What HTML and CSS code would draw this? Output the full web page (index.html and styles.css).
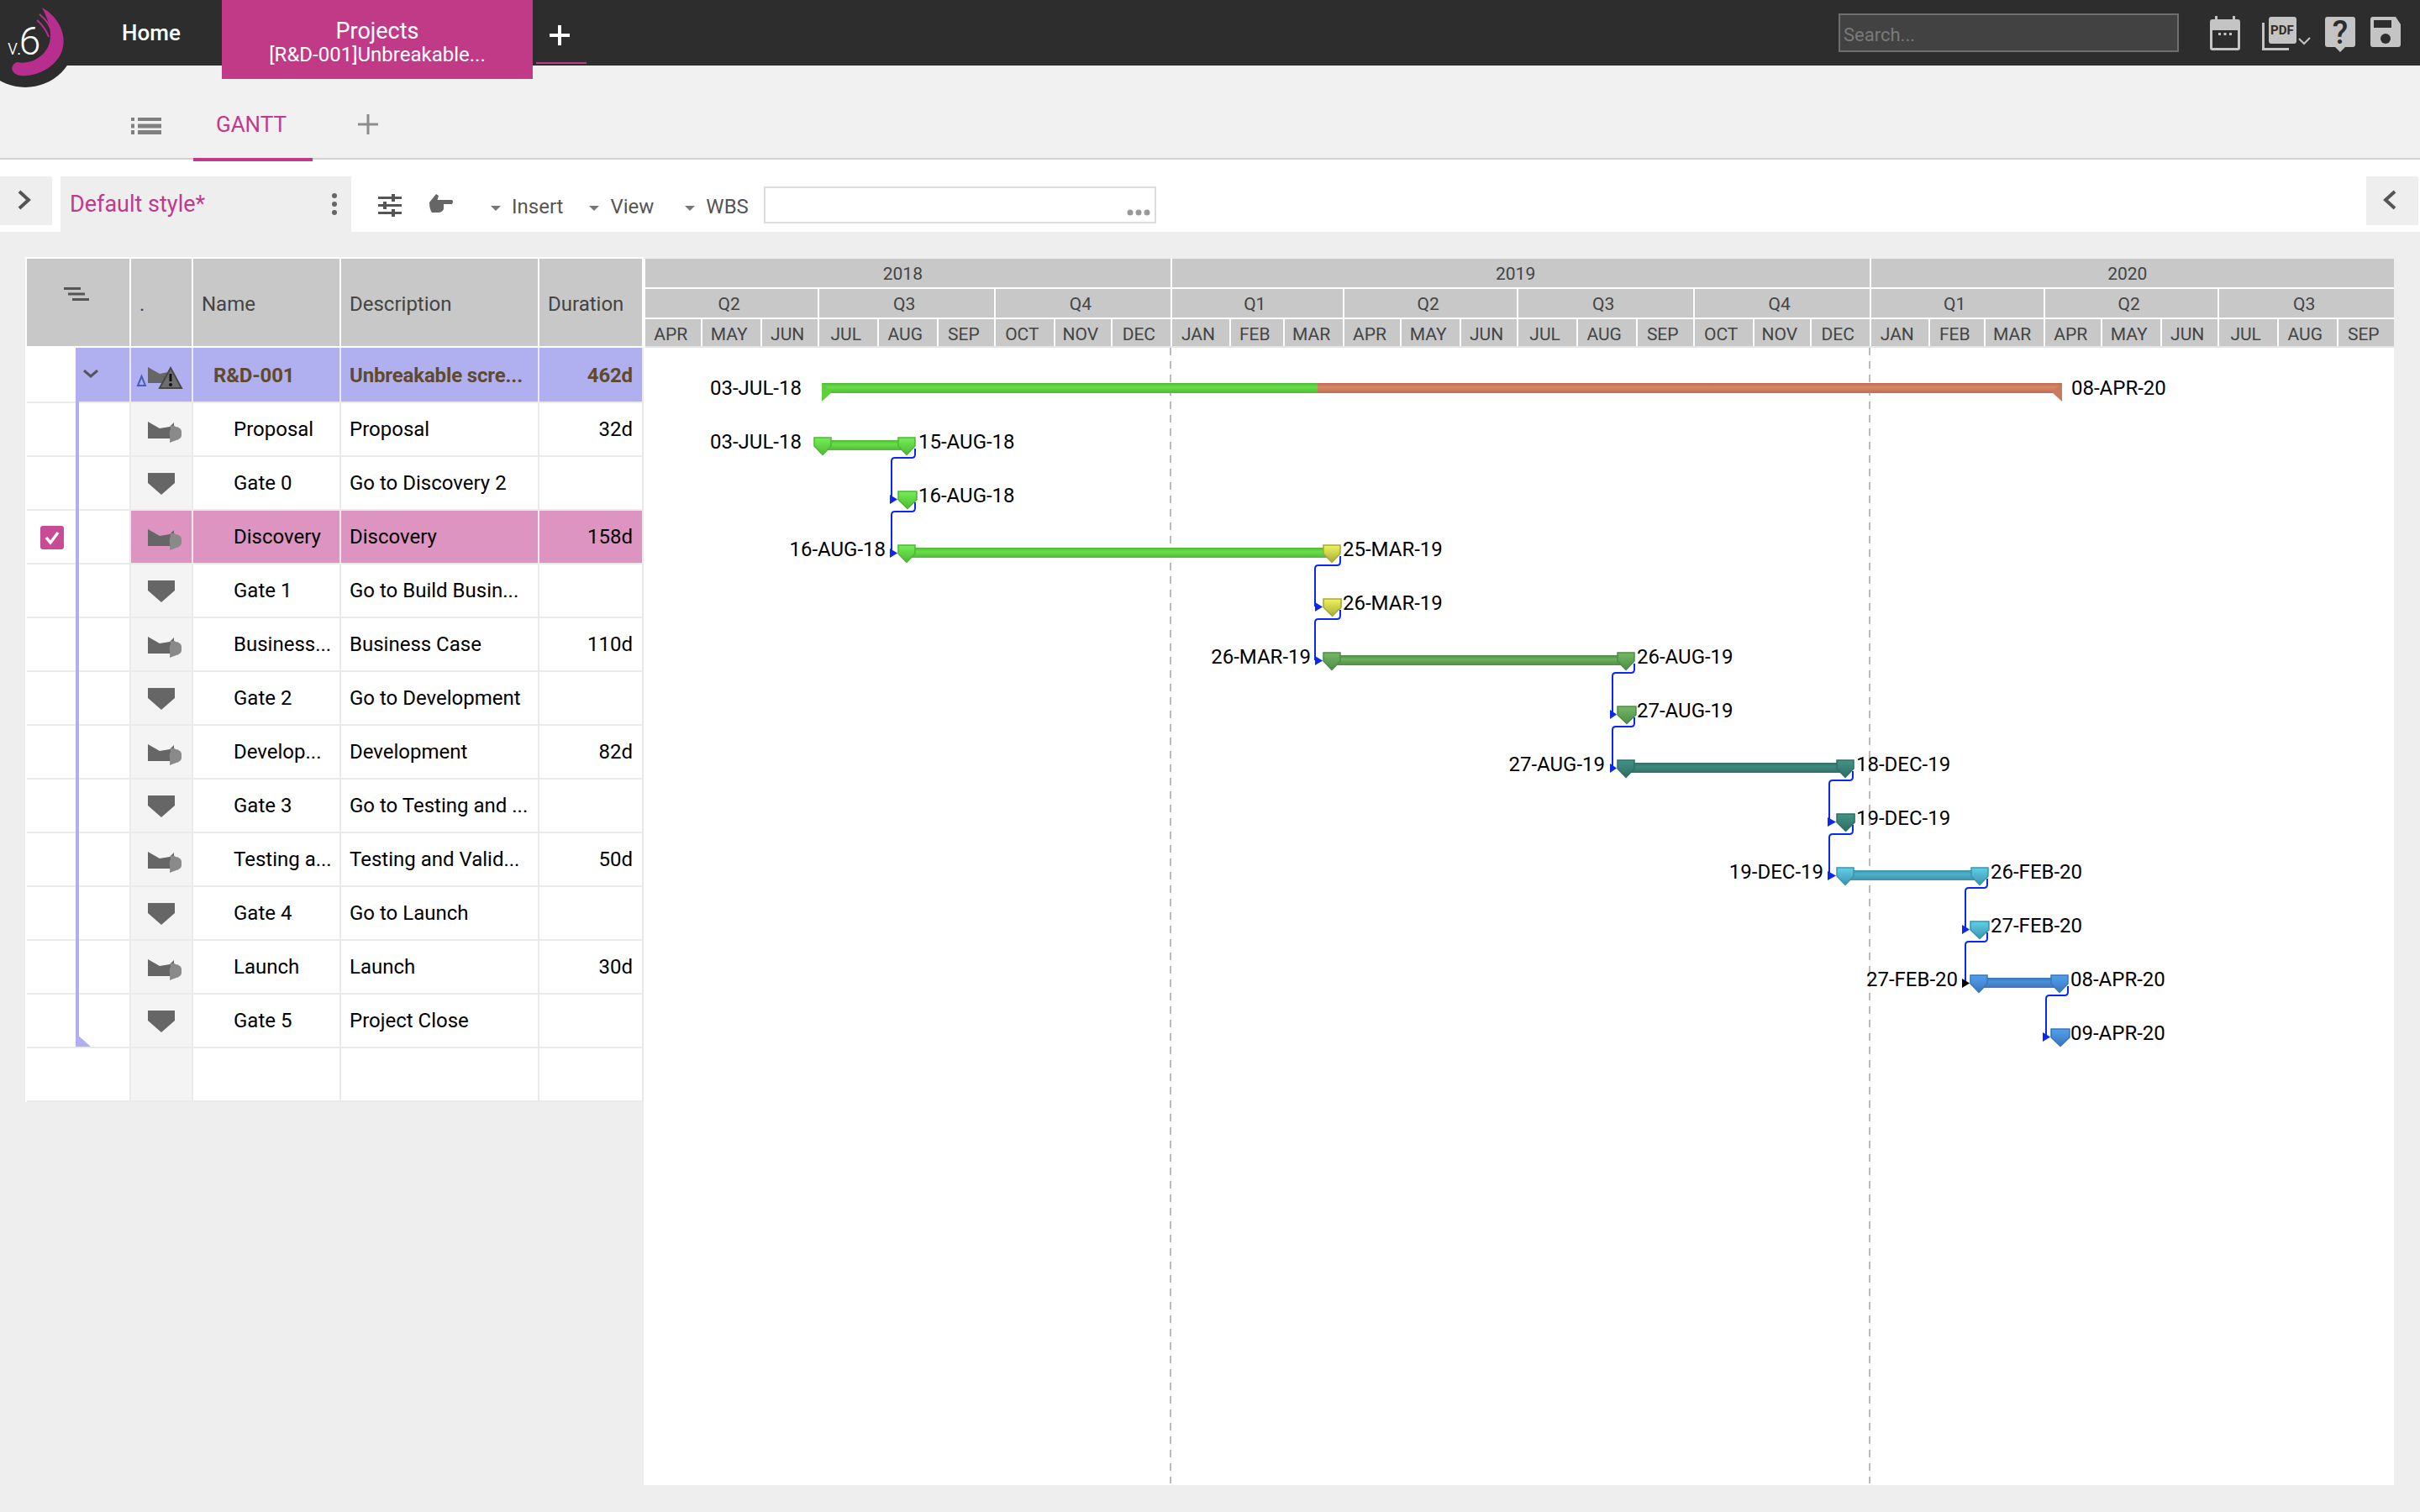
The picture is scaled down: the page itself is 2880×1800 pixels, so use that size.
FILE: index.html
```html
<!DOCTYPE html>
<html lang="en">
<head>
    <meta charset="UTF-8">
    <title>Projects - Gantt</title>
    <link rel="stylesheet" href="styles.css">
</head>
<body>
    <svg class="sprite" width="0" height="0">
        <symbol id="icon-task" viewBox="0 0 48 36">
            <polygon points="8,9 22,17 34,15 39,10 39,29 8,29" fill="#666"/>
            <polygon points="34,34 35,14 40,14 44,20 42,31" fill="#8a8a8a"/>
            <ellipse cx="41" cy="23" rx="7.500" ry="8" fill="#8a8a8a"/>
        </symbol>
        <symbol id="icon-gate" viewBox="0 0 48 36">
            <polygon points="8,6 40,6 40,18 24,32 8,18" fill="#666"/>
        </symbol>
    </svg>

    <svg class="logo" width="110" height="110" viewBox="0 0 110 110">
        <circle cx="30" cy="43" r="61" fill="#2d2d2d"/>
        <path d="M50 9 C70 20 80 42 74 60 C68 78 46 92 24 90 C13 88 11 78 20 74 C34 77 50 70 57 56 C63 44 60 28 50 9 Z" fill="#b82e8e"/>
        <path d="M47 17 C56 24 61 32 64 44 M44 24 C51 30 55 36 58 44" fill="none" stroke="#b82e8e" stroke-width="2"/>
        <text class="logo-text" x="9" y="65">v.<tspan class="logo-six" dx="-3">6</tspan></text>
    </svg>

    <div class="topbar">
        <div class="top-home">Home</div>
        <div class="top-tab">
            <div class="top-tab-title">Projects</div>
            <div>[R&amp;D-001]Unbreakable...</div>
        </div>
        <div class="top-add">
            <svg width="24" height="24" viewBox="0 0 24 24"><path d="M10 0h4v10h10v4H14v10h-4V14H0v-4h10z" fill="#fff"/></svg>
        </div>
        <input class="top-search" type="text" placeholder="Search...">
        <svg class="top-icon icon-calendar" width="36" height="41" viewBox="0 0 36 41">
            <rect x="6" y="0" width="3" height="8" fill="#c4c4c4"/>
            <rect x="27" y="0" width="3" height="8" fill="#c4c4c4"/>
            <rect x="0" y="4" width="36" height="37" rx="3" fill="#c4c4c4"/>
            <rect x="3" y="17" width="30" height="21" fill="#2d2d2d"/>
            <rect x="10" y="20" width="3" height="3" fill="#c4c4c4"/>
            <rect x="16.5" y="20" width="3" height="3" fill="#c4c4c4"/>
            <rect x="23" y="20" width="3" height="3" fill="#c4c4c4"/>
        </svg>
        <svg class="top-icon icon-pdf" width="58" height="41" viewBox="0 0 58 41">
            <path d="M1.5 8V39.5H32" fill="none" stroke="#c4c4c4" stroke-width="3"/>
            <rect x="8" y="1" width="33" height="32" rx="3" fill="#c4c4c4"/>
            <text class="pdf-text" x="10" y="22">PDF</text>
            <path d="M44 27l6 6 7-7" fill="none" stroke="#c4c4c4" stroke-width="2"/>
        </svg>
        <svg class="top-icon icon-help" width="36" height="48" viewBox="0 -6 36 48">
            <path d="M3 0H33Q36 0 36 3V33Q36 36 33 36H24L18 42L12 36H3Q0 36 0 33V3Q0 0 3 0Z" fill="#c4c4c4"/>
            <text class="help-text" x="18" y="32">?</text>
        </svg>
        <svg class="top-icon icon-save" width="36" height="36" viewBox="0 0 36 36">
            <path d="M3 0H30L36 9V33Q36 36 33 36H3Q0 36 0 33V3Q0 0 3 0Z" fill="#c4c4c4"/>
            <rect x="4" y="4" width="21" height="9" fill="#2d2d2d"/>
            <circle cx="18" cy="26" r="6" fill="#2d2d2d"/>
        </svg>
    </div>

    <div class="tabbar">
        <svg class="tab-list" width="36" height="20" viewBox="0 0 36 20">
            <path d="M0 0h4v4H0zM8 0h28v4H8zM0 7.500h4v5H0zM8 7.500h28v5H8zM0 15h4v5H0zM8 15h28v5H8z" fill="#808080"/>
        </svg>
        <div class="tab-gantt">GANTT</div>
        <svg class="tab-add" width="24" height="24" viewBox="0 0 24 24"><path d="M10.500 0h3v10.500H24v3H13.500V24h-3V13.500H0v-3h10.500z" fill="#8c8c8c"/></svg>
    </div>

    <div class="toolbar">
        <div class="side-btn">
            <svg width="16" height="24" viewBox="0 0 16 24"><path d="M2 2l11 10L2 22" fill="none" stroke="#555" stroke-width="4"/></svg>
        </div>
        <div class="style-box">
            <span>Default style*</span>
            <svg width="6" height="26" viewBox="0 0 6 26"><circle cx="3" cy="3" r="3" fill="#666"/><circle cx="3" cy="13" r="3" fill="#666"/><circle cx="3" cy="23" r="3" fill="#666"/></svg>
        </div>
        <svg class="tool-sliders" width="28" height="28" viewBox="0 0 28 28">
            <path d="M0 4h16V1h4v3h8v3h-8v3h-4V7H0zM0 13h6v-3h4v3h18v3H10v3H6v-3H0zM0 22h16v-3h4v3h8v3h-8v3h-4v-3H0z" fill="#555"/>
        </svg>
        <svg class="tool-hand" width="28" height="22" viewBox="0 0 28 22">
            <path d="M8 0 L11 2 L9.500 7 H27 Q29 9 27 12 H17 L17 18 Q15 22 11 22 H3 Q0 18 0 10 Z" fill="#666"/>
        </svg>
        <div class="tool-menu tool-insert"><i class="caret"></i>Insert</div>
        <div class="tool-menu tool-view"><i class="caret"></i>View</div>
        <div class="tool-menu tool-wbs"><i class="caret"></i>WBS</div>
        <div class="wbs-input">
            <svg width="28" height="8" viewBox="0 0 28 8"><circle cx="4" cy="4" r="3.500" fill="#999"/><circle cx="14" cy="4" r="3.500" fill="#999"/><circle cx="24" cy="4" r="3.500" fill="#999"/></svg>
        </div>
        <div class="side-btn side-right">
            <svg width="16" height="24" viewBox="0 0 16 24"><path d="M14 2L3 12l11 10" fill="none" stroke="#555" stroke-width="4"/></svg>
        </div>
    </div>

    <div class="main">
        <div class="table-wrap">
            <div class="row row-head">
                <div class="cell cell-sort">
                    <svg width="30" height="16" viewBox="0 0 30 16"><path d="M0 0h20v3H0zM5 6.500h20v3H5zM10 13h20v3H10z" fill="#555"/></svg>
                </div>
                <div class="cell">.</div>
                <div class="cell">Name</div>
                <div class="cell">Description</div>
                <div class="cell">Duration</div>
            </div>
            <div class="table-body">
                <div class="tree-line"></div>
                <div class="row row-root">
                    <div class="cell cell-first"><div class="expander"><svg width="18" height="10" viewBox="0 0 18 10"><path d="M1 1l8 7 8-7" fill="none" stroke="#555" stroke-width="3"/></svg></div></div>
                    <div class="cell cell-icon">
                        <svg width="64" height="36" viewBox="0 0 64 36">
                            <polygon points="8.500,20 4,31 13,31" fill="none" stroke="#4a5ac0" stroke-width="2"/>
                            <polygon points="16,9 30,17 40,15 40,28 16,28" fill="#666"/>
                            <polygon points="43,10 56,34 30,34" fill="#6e6e6e" stroke="#484848" stroke-width="2"/>
                            <rect x="41.500" y="17" width="3" height="9" fill="#111"/>
                            <circle cx="43" cy="30" r="2" fill="#111"/>
                        </svg>
                    </div>
                    <div class="cell cell-name">R&amp;D-001</div>
                    <div class="cell">Unbreakable scre...</div>
                    <div class="cell cell-num">462d</div>
                </div>
                <div class="row">
                    <div class="cell cell-first"></div>
                    <div class="cell cell-icon"><svg width="48" height="36"><use href="#icon-task"/></svg></div>
                    <div class="cell cell-name">Proposal</div>
                    <div class="cell">Proposal</div>
                    <div class="cell cell-num">32d</div>
                </div>
                <div class="row">
                    <div class="cell cell-first"></div>
                    <div class="cell cell-icon"><svg width="48" height="36"><use href="#icon-gate"/></svg></div>
                    <div class="cell cell-name">Gate 0</div>
                    <div class="cell">Go to Discovery 2</div>
                    <div class="cell cell-num"></div>
                </div>
                <div class="row row-selected">
                    <div class="cell cell-first">
                        <svg class="check" width="28" height="28" viewBox="0 0 28 28">
                            <rect width="28" height="28" rx="3" fill="#c84b96"/>
                            <path d="M7 14l5 6 9-12" fill="none" stroke="#fff" stroke-width="3.500"/>
                        </svg>
                    </div>
                    <div class="cell cell-icon"><svg width="48" height="36"><use href="#icon-task"/></svg></div>
                    <div class="cell cell-name">Discovery</div>
                    <div class="cell">Discovery</div>
                    <div class="cell cell-num">158d</div>
                </div>
                <div class="row">
                    <div class="cell cell-first"></div>
                    <div class="cell cell-icon"><svg width="48" height="36"><use href="#icon-gate"/></svg></div>
                    <div class="cell cell-name">Gate 1</div>
                    <div class="cell">Go to Build Busin...</div>
                    <div class="cell cell-num"></div>
                </div>
                <div class="row">
                    <div class="cell cell-first"></div>
                    <div class="cell cell-icon"><svg width="48" height="36"><use href="#icon-task"/></svg></div>
                    <div class="cell cell-name">Business...</div>
                    <div class="cell">Business Case</div>
                    <div class="cell cell-num">110d</div>
                </div>
                <div class="row">
                    <div class="cell cell-first"></div>
                    <div class="cell cell-icon"><svg width="48" height="36"><use href="#icon-gate"/></svg></div>
                    <div class="cell cell-name">Gate 2</div>
                    <div class="cell">Go to Development</div>
                    <div class="cell cell-num"></div>
                </div>
                <div class="row">
                    <div class="cell cell-first"></div>
                    <div class="cell cell-icon"><svg width="48" height="36"><use href="#icon-task"/></svg></div>
                    <div class="cell cell-name">Develop...</div>
                    <div class="cell">Development</div>
                    <div class="cell cell-num">82d</div>
                </div>
                <div class="row">
                    <div class="cell cell-first"></div>
                    <div class="cell cell-icon"><svg width="48" height="36"><use href="#icon-gate"/></svg></div>
                    <div class="cell cell-name">Gate 3</div>
                    <div class="cell">Go to Testing and ...</div>
                    <div class="cell cell-num"></div>
                </div>
                <div class="row">
                    <div class="cell cell-first"></div>
                    <div class="cell cell-icon"><svg width="48" height="36"><use href="#icon-task"/></svg></div>
                    <div class="cell cell-name">Testing a...</div>
                    <div class="cell">Testing and Valid...</div>
                    <div class="cell cell-num">50d</div>
                </div>
                <div class="row">
                    <div class="cell cell-first"></div>
                    <div class="cell cell-icon"><svg width="48" height="36"><use href="#icon-gate"/></svg></div>
                    <div class="cell cell-name">Gate 4</div>
                    <div class="cell">Go to Launch</div>
                    <div class="cell cell-num"></div>
                </div>
                <div class="row">
                    <div class="cell cell-first"></div>
                    <div class="cell cell-icon"><svg width="48" height="36"><use href="#icon-task"/></svg></div>
                    <div class="cell cell-name">Launch</div>
                    <div class="cell">Launch</div>
                    <div class="cell cell-num">30d</div>
                </div>
                <div class="row">
                    <div class="cell cell-first"></div>
                    <div class="cell cell-icon"><svg width="48" height="36"><use href="#icon-gate"/></svg></div>
                    <div class="cell cell-name">Gate 5</div>
                    <div class="cell">Project Close</div>
                    <div class="cell cell-num"></div>
                </div>
                <div class="row">
                    <div class="cell cell-first"></div>
                    <div class="cell cell-icon"></div>
                    <div class="cell cell-name"></div>
                    <div class="cell"></div>
                    <div class="cell cell-num"></div>
                </div>
            </div>
        </div>

        <div class="timeline">
            <div class="scale">
                <div class="scale-year">2018</div>
                <div class="scale-year">2019</div>
                <div class="scale-year">2020</div>
                <div class="scale-q">Q2</div>
                <div class="scale-q">Q3</div>
                <div class="scale-q">Q4</div>
                <div class="scale-q">Q1</div>
                <div class="scale-q">Q2</div>
                <div class="scale-q">Q3</div>
                <div class="scale-q">Q4</div>
                <div class="scale-q">Q1</div>
                <div class="scale-q">Q2</div>
                <div class="scale-q">Q3</div>
                <div>APR</div><div>MAY</div><div>JUN</div><div>JUL</div><div>AUG</div><div>SEP</div><div>OCT</div><div>NOV</div><div>DEC</div>
                <div>JAN</div><div>FEB</div><div>MAR</div><div>APR</div><div>MAY</div><div>JUN</div><div>JUL</div><div>AUG</div><div>SEP</div><div>OCT</div><div>NOV</div><div>DEC</div>
                <div>JAN</div><div>FEB</div><div>MAR</div><div>APR</div><div>MAY</div><div>JUN</div><div>JUL</div><div>AUG</div><div>SEP</div>
            </div>

            <!-- chart uses page coordinates through the viewBox -->
            <svg class="chart" width="2081" height="1352" viewBox="768 414 2081 1352">
                <defs>
                    <linearGradient id="bar-green" x2="0" y2="1"><stop offset="0" stop-color="#4fb735"/><stop offset=".4" stop-color="#68e04a"/><stop offset="1" stop-color="#50b836"/></linearGradient>
                    <linearGradient id="bar-rust" x2="0" y2="1"><stop offset="0" stop-color="#b96d54"/><stop offset=".4" stop-color="#d98568"/><stop offset="1" stop-color="#bb6f56"/></linearGradient>
                    <linearGradient id="bar-moss" x2="0" y2="1"><stop offset="0" stop-color="#4f8c45"/><stop offset=".4" stop-color="#6fb060"/><stop offset="1" stop-color="#4f8c45"/></linearGradient>
                    <linearGradient id="bar-teal" x2="0" y2="1"><stop offset="0" stop-color="#2f6f66"/><stop offset=".4" stop-color="#3f8a7f"/><stop offset="1" stop-color="#2f6f66"/></linearGradient>
                    <linearGradient id="bar-cyan" x2="0" y2="1"><stop offset="0" stop-color="#3d93ab"/><stop offset=".4" stop-color="#4fb3cc"/><stop offset="1" stop-color="#3d8fa6"/></linearGradient>
                    <linearGradient id="bar-blue" x2="0" y2="1"><stop offset="0" stop-color="#3a75bb"/><stop offset=".4" stop-color="#4a8fd8"/><stop offset="1" stop-color="#3a75bb"/></linearGradient>
                    <linearGradient id="top-green" x2="0" y2="1"><stop offset="0" stop-color="#74ef56"/><stop offset="1" stop-color="#4fb836"/></linearGradient>
                    <linearGradient id="top-yellow" x2="0" y2="1"><stop offset="0" stop-color="#eef35c"/><stop offset="1" stop-color="#aaac3a"/></linearGradient>
                    <linearGradient id="top-moss" x2="0" y2="1"><stop offset="0" stop-color="#74b866"/><stop offset="1" stop-color="#4f8c45"/></linearGradient>
                    <linearGradient id="top-teal" x2="0" y2="1"><stop offset="0" stop-color="#439488"/><stop offset="1" stop-color="#2e6c63"/></linearGradient>
                    <linearGradient id="top-cyan" x2="0" y2="1"><stop offset="0" stop-color="#5fd0ea"/><stop offset="1" stop-color="#3d93ab"/></linearGradient>
                    <linearGradient id="top-blue" x2="0" y2="1"><stop offset="0" stop-color="#52a0ee"/><stop offset="1" stop-color="#3a75bb"/></linearGradient>
                    <polygon id="m-green" points="1,1 21,1 21,11 11,21.500 1,11" fill="url(#top-green)" stroke="#4fb735" stroke-width="1.500"/>
                    <polygon id="m-yellow" points="1,1 21,1 21,11 11,21.500 1,11" fill="url(#top-yellow)" stroke="#a5a83a" stroke-width="1.500"/>
                    <polygon id="m-moss" points="1,1 21,1 21,11 11,21.500 1,11" fill="url(#top-moss)" stroke="#4f8c45" stroke-width="1.500"/>
                    <polygon id="m-teal" points="1,1 21,1 21,11 11,21.500 1,11" fill="url(#top-teal)" stroke="#2f6f66" stroke-width="1.500"/>
                    <polygon id="m-cyan" points="1,1 21,1 21,11 11,21.500 1,11" fill="url(#top-cyan)" stroke="#3d93ab" stroke-width="1.500"/>
                    <polygon id="m-blue" points="1,1 21,1 21,11 11,21.500 1,11" fill="url(#top-blue)" stroke="#3a75bb" stroke-width="1.500"/>
                </defs>

                <line class="year-line" x1="1393" y1="414" x2="1393" y2="1766"/>
                <line class="year-line" x1="2225" y1="414" x2="2225" y2="1766"/>

                <!-- summary bar -->
                <rect x="978" y="456" width="590" height="12" fill="url(#bar-green)"/>
                <rect x="1568" y="456" width="886" height="12" fill="url(#bar-rust)"/>
                <polygon points="978,456 990,467 978,478" fill="#5fcf3e"/>
                <polygon points="2454,456 2442,467 2454,478" fill="#c87a5e"/>

                <!-- links -->
                <g class="links">
                    <path d="M1089 534V541Q1089 545 1085 545H1065Q1061 545 1061 549V594"/>
                    <path d="M1089 598V605Q1089 609 1085 609H1065Q1061 609 1061 613V658"/>
                    <path d="M1595 662V669Q1595 673 1591 673H1569Q1565 673 1565 677V722"/>
                    <path d="M1595 726V733Q1595 737 1591 737H1569Q1565 737 1565 741V786"/>
                    <path d="M1945 790V797Q1945 801 1941 801H1923Q1919 801 1919 805V850"/>
                    <path d="M1945 854V861Q1945 865 1941 865H1923Q1919 865 1919 869V914"/>
                    <path d="M2205 918V925Q2205 929 2201 929H2181Q2177 929 2177 933V978"/>
                    <path d="M2205 982V989Q2205 993 2201 993H2181Q2177 993 2177 997V1042"/>
                    <path d="M2365 1046V1053Q2365 1057 2361 1057H2343Q2339 1057 2339 1061V1106"/>
                    <path d="M2365 1110V1117Q2365 1121 2361 1121H2343Q2339 1121 2339 1125V1170"/>
                    <path d="M2461 1174V1181Q2461 1185 2457 1185H2439Q2435 1185 2435 1189V1234"/>
                </g>
                <g fill="#0a28f0">
                    <polygon points="1059,589 1068,594.500 1059,600"/>
                    <polygon points="1059,653 1068,658.500 1059,664"/>
                    <polygon points="1565,717 1574,722.500 1565,728"/>
                    <polygon points="1565,781 1574,786.500 1565,792"/>
                    <polygon points="1916,845 1924,850.500 1916,856"/>
                    <polygon points="1916,909 1924,914.500 1916,920"/>
                    <polygon points="2175,973 2185,978.500 2175,984"/>
                    <polygon points="2175,1037 2185,1042.500 2175,1048"/>
                    <polygon points="2335,1101 2344,1106.500 2335,1112"/>
                    <polygon points="2431,1229 2440,1234.500 2431,1240"/>
                </g>
                <polygon points="2335,1165 2344,1170.500 2335,1176" fill="#000"/>

                <!-- task bars -->
                <rect x="979" y="524" width="100" height="12" fill="url(#bar-green)"/>
                <rect x="1079" y="652" width="506" height="12" fill="url(#bar-green)"/>
                <rect x="1585" y="780" width="350" height="12" fill="url(#bar-moss)"/>
                <rect x="1935" y="908" width="260" height="12" fill="url(#bar-teal)"/>
                <rect x="2195" y="1036" width="160" height="12" fill="url(#bar-cyan)"/>
                <rect x="2355" y="1164" width="96" height="12" fill="url(#bar-blue)"/>

                <!-- markers -->
                <use href="#m-green" x="968" y="520"/>
                <use href="#m-green" x="1068" y="520"/>
                <use href="#m-green" transform="translate(1068 584) scale(1.090 1)"/>
                <use href="#m-green" x="1068" y="648"/>
                <use href="#m-yellow" x="1574" y="648"/>
                <use href="#m-yellow" transform="translate(1574 712) scale(1.050 1)"/>
                <use href="#m-moss" x="1574" y="776"/>
                <use href="#m-moss" x="1924" y="776"/>
                <use href="#m-moss" transform="translate(1924 840) scale(1.090 1)"/>
                <use href="#m-teal" x="1924" y="904"/>
                <use href="#m-teal" x="2185" y="904"/>
                <use href="#m-teal" transform="translate(2185 968) scale(1.050 1)"/>
                <use href="#m-cyan" x="2345" y="1032"/>
                <use href="#m-cyan" transform="translate(2344 1096) scale(1.090 1)"/>
                <use href="#m-cyan" x="2185" y="1032"/>
                <use href="#m-blue" x="2344" y="1160"/>
                <use href="#m-blue" x="2440" y="1160"/>
                <use href="#m-blue" transform="translate(2440 1224) scale(1.090 1)"/>

                <!-- dates -->
                <text class="date" x="845" y="470">03-JUL-18</text>
                <text class="date" x="2465" y="470">08-APR-20</text>
                <text class="date" x="845" y="534">03-JUL-18</text>
                <text class="date" x="1093" y="534">15-AUG-18</text>
                <text class="date" x="1093" y="598">16-AUG-18</text>
                <text class="date date-left" x="1054" y="662">16-AUG-18</text>
                <text class="date" x="1598" y="662">25-MAR-19</text>
                <text class="date" x="1598" y="726">26-MAR-19</text>
                <text class="date date-left" x="1560" y="790">26-MAR-19</text>
                <text class="date" x="1948" y="790">26-AUG-19</text>
                <text class="date" x="1948" y="854">27-AUG-19</text>
                <text class="date date-left" x="1910" y="918">27-AUG-19</text>
                <text class="date" x="2209" y="918">18-DEC-19</text>
                <text class="date" x="2209" y="982">19-DEC-19</text>
                <text class="date date-left" x="2170" y="1046">19-DEC-19</text>
                <text class="date" x="2369" y="1046">26-FEB-20</text>
                <text class="date" x="2369" y="1110">27-FEB-20</text>
                <text class="date date-left" x="2330" y="1174">27-FEB-20</text>
                <text class="date" x="2464" y="1174">08-APR-20</text>
                <text class="date" x="2464" y="1238">09-APR-20</text>
            </svg>
        </div>
    </div>
</body>
</html>
```

FILE: styles.css
```css
html, body {
    margin: 0;
    padding: 0;
}
body {
    width: 2880px;
    height: 1800px;
    overflow: hidden;
    background-color: #eeeeee;
    font-family: Roboto, "Liberation Sans", sans-serif;
    font-size: 24px;
    color: #000;
}
.sprite {
    position: absolute;
}
.logo {
    position: absolute;
    left: 0;
    top: 0;
    z-index: 5;
}
.logo-text {
    font-size: 25px;
    font-weight: 300;
    fill: #fff;
}
.logo-six {
    font-size: 46px;
}

/* top bar */
.topbar {
    height: 78px;
    background-color: #2d2d2d;
    display: flex;
    align-items: flex-start;
}
.top-home {
    width: 264px;
    box-sizing: border-box;
    padding: 24px 4px 0 100px;
    text-align: center;
    color: #fff;
    font-size: 26px;
    font-weight: 500;
}
.top-tab {
    width: 370px;
    height: 94px;
    box-sizing: border-box;
    padding-top: 23px;
    background-color: #c13a88;
    color: #fff;
    font-size: 24px;
    line-height: 28px;
    text-align: center;
    position: relative;
    z-index: 2;
}
.top-tab-title {
    font-size: 27px;
}
.top-add {
    width: 60px;
    height: 76px;
    margin-left: 4px;
    box-sizing: border-box;
    padding: 30px 0 0 16px;
    border-bottom: 2px solid #c13a88;
}
.top-search {
    width: 405px;
    height: 46px;
    margin: 16px 0 0 1490px;
    padding: 4px 4px 0;
    box-sizing: border-box;
    border: 2px solid #6e6e6e;
    background-color: #424242;
    font-family: inherit;
    font-size: 22px;
}
.top-search::placeholder {
    color: #7a7a7a;
    opacity: 1;
}
.top-icon {
    flex: none;
}
.icon-calendar {
    margin: 19px 0 0 37px;
}
.icon-pdf {
    margin: 19px 0 0 26px;
}
.icon-help {
    margin: 14px 0 0 17px;
}
.icon-save {
    margin: 20px 0 0 18px;
}
.pdf-text {
    font-size: 15px;
    font-weight: 700;
    fill: #2d2d2d;
}
.help-text {
    font-size: 38px;
    font-weight: 500;
    fill: #2d2d2d;
    text-anchor: middle;
}

/* gantt tab row */
.tabbar {
    height: 112px;
    box-sizing: border-box;
    background-color: #f1f1f1;
    border-bottom: 2px solid #d3d3d3;
    display: flex;
    align-items: flex-start;
}
.tab-list {
    margin: 62px 0 0 156px;
}
.tab-gantt {
    width: 142px;
    height: 114px;
    margin-left: 38px;
    box-sizing: border-box;
    padding: 54px 4px 0 0;
    line-height: 32px;
    color: #c2398b;
    font-size: 26px;
    text-align: center;
    border-bottom: 4px solid #c2398b;
}
.tab-add {
    margin: 58px 0 0 54px;
}

/* toolbar */
.toolbar {
    height: 86px;
    background-color: #fff;
    display: flex;
    align-items: flex-start;
}
.side-btn {
    width: 62px;
    height: 58px;
    margin-top: 20px;
    background-color: #eeeeee;
    box-sizing: border-box;
    padding: 16px 0 0 21px;
    flex: none;
}
.side-right {
    margin-left: 1440px;
    padding-left: 20px;
}
.style-box {
    width: 346px;
    height: 66px;
    margin: 20px 0 0 10px;
    box-sizing: border-box;
    padding: 0 17px 0 11px;
    background-color: #eeeeee;
    color: #c2398b;
    font-size: 27px;
    display: flex;
    align-items: center;
    justify-content: space-between;
}
.tool-sliders {
    margin: 40px 0 0 32px;
    flex: none;
}
.tool-hand {
    margin: 41px 0 0 33px;
    flex: none;
    filter: blur(.6px);
}
.tool-menu {
    display: flex;
    align-items: center;
    gap: 13px;
    margin-top: 42px;
    line-height: 28px;
    color: #555;
    flex: none;
}
.tool-insert {
    margin-left: 45px;
}
.tool-view {
    margin-left: 31px;
}
.tool-wbs {
    margin-left: 37px;
}
.caret {
    width: 0;
    height: 0;
    margin-top: 3px;
    border-left: 6px solid transparent;
    border-right: 6px solid transparent;
    border-top: 6px solid #777;
}
.wbs-input {
    width: 467px;
    height: 44px;
    margin: 32px 0 0 18px;
    box-sizing: border-box;
    border: 2px solid #ddd;
    padding: 0 5px 7px 0;
    display: flex;
    align-items: flex-end;
    justify-content: flex-end;
    flex: none;
}

/* main area */
.main {
    display: flex;
    align-items: flex-start;
    padding: 30px 0 0 30px;
}
.table-wrap {
    width: 736px;
    box-sizing: border-box;
    padding: 2px 0 0 2px;
    background-color: #fff;
}
.row {
    display: grid;
    grid-template-columns: 122px 72px 174px 234px 122px;
    gap: 2px;
    height: 64px;
    box-sizing: border-box;
    background-color: #eaeaea;
    border-bottom: 2px solid #eaeaea;
}
.cell {
    background-color: #fff;
    padding: 0 10px;
    display: flex;
    align-items: center;
    box-sizing: border-box;
    min-width: 0;
    white-space: nowrap;
    overflow: hidden;
}
.row-head {
    height: 106px;
    background-color: #fff;
    border-bottom: 2px solid #fff;
}
.row-head .cell {
    background-color: #c8c8c8;
    color: #444;
    padding-top: 4px;
}
.row-head .cell-sort {
    padding: 0 0 20px 44px;
}
.table-body {
    position: relative;
}
.tree-line {
    position: absolute;
    left: 58px;
    top: 64px;
    width: 4px;
    height: 768px;
    background-color: #b0b0f0;
    z-index: 2;
}
.tree-line::after {
    content: "";
    position: absolute;
    left: 0;
    bottom: 0;
    width: 18px;
    height: 16px;
    background-color: #b0b0f0;
    clip-path: polygon(0 0, 100% 100%, 0 100%);
}
.cell-first {
    padding: 0 0 0 16px;
}
.cell-icon {
    background-color: #f4f4f4;
    padding: 0;
    justify-content: center;
}
.cell-icon svg {
    filter: blur(.5px);
}
.cell-name {
    padding-left: 48px;
}
.cell-num {
    justify-content: flex-end;
    padding-right: 11px;
}
.row-root {
    height: 66px;
    background-color: #eaeaea;
    color: #5f4a30;
    font-weight: 700;
    letter-spacing: -0.15px;
    line-height: 30px;
}
.row-root .cell {
    background-color: #b0b0f0;
    padding-top: 2px;
}
.row-root .cell-first {
    background-color: #fff;
    padding: 0;
    align-items: stretch;
}
.row-root .cell-name {
    padding-left: 24px;
}
.expander {
    margin-left: 58px;
    flex: 1;
    background-color: #b0b0f0;
    padding: 26px 0 0 9px;
}
.expander svg {
    display: block;
}
.row-root .cell-icon {
    padding: 0;
}
.row-selected .cell {
    background-color: #dd94c0;
}
.row-selected .cell-first {
    background-color: #fff;
}
.check {
    margin-top: 2px;
}

/* timeline */
.timeline {
    width: 2083px;
    height: 1460px;
    margin-top: 2px;
    box-sizing: border-box;
    padding-left: 2px;
    background-color: #fff;
}
.scale {
    display: grid;
    grid-template-columns: 30fr 31fr 30fr 31fr 31fr 30fr 31fr 30fr 31fr
                           31fr 28fr 31fr 30fr 31fr 30fr 31fr 31fr 30fr 31fr 30fr 31fr
                           31fr 29fr 31fr 30fr 31fr 30fr 31fr 31fr 30fr;
    grid-template-rows: 34px 34px 32px;
    gap: 2px;
    height: 104px;
    background-color: #fff;
    font-size: 21px;
    color: #444;
    box-shadow: 0 2px 0 #e5e5e5;
}
.scale div {
    background-color: #c8c8c8;
    display: flex;
    align-items: center;
    justify-content: center;
    box-sizing: border-box;
    padding: 3px 6px 0 0;
}
.scale .scale-q {
    grid-column: span 3;
    padding-top: 2px;
}
.scale .scale-year {
    padding: 2px 12px 0 0;
}
.scale-year:nth-child(1), .scale-year:nth-child(3) {
    grid-column: span 9;
}
.scale-year:nth-child(2) {
    grid-column: span 12;
}
.chart {
    display: block;
    margin-top: 2px;
}
.year-line {
    stroke: #bbb;
    stroke-width: 2;
    stroke-dasharray: 9 7;
}
.links path {
    fill: none;
    stroke: #0a28f0;
    stroke-width: 2;
}
.date {
    font-size: 24px;
    fill: #000;
}
.date-left {
    text-anchor: end;
}
```
